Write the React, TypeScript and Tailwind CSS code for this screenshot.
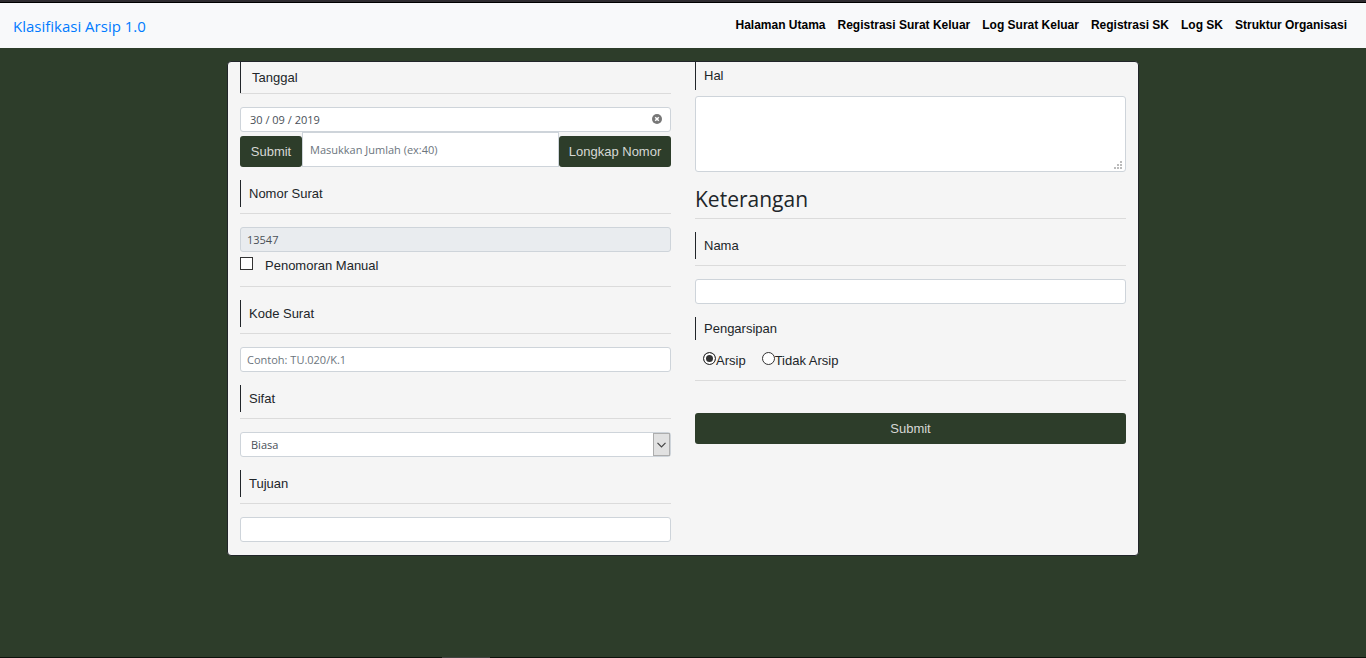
import { useState, type ReactNode } from "react";

const NAV_LINKS = [
  "Halaman Utama",
  "Registrasi Surat Keluar",
  "Log Surat Keluar",
  "Registrasi SK",
  "Log SK",
  "Struktur Organisasi",
];

const UI_FONT = "font-['Open_Sans',sans-serif]";
const FIELD = `block w-full rounded-[3px] border border-[#ced4da] bg-white text-[11px] text-[#495057] placeholder-[#6c757d] outline-none ${UI_FONT}`;
const BUTTON = "h-[31px] rounded-[3px] bg-[#2d3d2a] text-[13px] text-[#d6d8d5] cursor-pointer";

function Divider() {
  return <hr className="border-0 border-t border-t-[#dbdbdb]" />;
}

function FieldLabel({ htmlFor, children }: { htmlFor: string; children: ReactNode }) {
  return (
    <label htmlFor={htmlFor} className="flex h-[27px] items-center border-l border-[#212529] pl-2">
      {children}
    </label>
  );
}

function Field({ id, label, children }: { id: string; label: string; children: ReactNode }) {
  return (
    <div className="pt-[13px]">
      <FieldLabel htmlFor={id}>{label}</FieldLabel>
      <div className="pt-[6px] pb-[13px]">
        <Divider />
      </div>
      {children}
    </div>
  );
}

function Radio({ id, label, checked, onSelect }: { id: string; label: string; checked: boolean; onSelect: () => void }) {
  return (
    <span className="flex items-center">
      <input
        type="radio"
        name="pengarsipan"
        id={id}
        checked={checked}
        onChange={onSelect}
        className="mb-1 size-[13px] appearance-none rounded-full border border-[#333] bg-white checked:bg-[#333] checked:shadow-[inset_0_0_0_2px_white]"
      />
      <label htmlFor={id} className="pt-[2px]">
        {label}
      </label>
    </span>
  );
}

export default function App() {
  const [date, setDate] = useState("30 / 09 / 2019");
  const [archive, setArchive] = useState(true);

  return (
    <div className="flex min-h-screen flex-col bg-[#2d3d2a] font-['Liberation_Sans',Arial,sans-serif] text-[13px] leading-5 text-[#212529]">
      <div className="h-[3px] border-b border-black bg-[#2e2c30]" />
      <header className="flex h-[45px] items-center justify-between bg-[#f8f9fa] pr-[19px] pl-[13px]">
        <a href="#" className={`text-[15px] text-[#007bff] ${UI_FONT}`}>
          Klasifikasi Arsip 1.0
        </a>
        <nav className="flex gap-3 pb-[2px] text-[12px] font-bold text-black">
          {NAV_LINKS.map((link) => (
            <a key={link} href="#">
              {link}
            </a>
          ))}
        </nav>
      </header>

      <main className="flex flex-1 flex-col items-center pt-[13px]">
        <form
          onSubmit={(e) => e.preventDefault()}
          className="grid w-full max-w-[912px] grid-cols-2 gap-6 rounded-[4px] border border-[#212529] bg-[#f5f5f5] px-3 pb-[13px]"
        >
          <div>
            <label htmlFor="tanggal" className="flex h-[31px] items-center border-l border-[#212529] pl-[11px]">
              Tanggal
            </label>
            <Divider />
            <div className="relative mt-[13px]">
              <input
                id="tanggal"
                value={date}
                onChange={(e) => setDate(e.target.value)}
                className={`${FIELD} h-[25px] pr-7 pl-[9px]`}
              />
              <button
                type="button"
                aria-label="Hapus tanggal"
                onClick={() => setDate("")}
                className="absolute top-[7px] right-[9px] cursor-pointer"
              >
                <svg viewBox="0 0 10 10" className="size-[10px]">
                  <circle cx="5" cy="5" r="5" fill="#777" />
                  <path d="M3.2 3.2 L6.8 6.8 M6.8 3.2 L3.2 6.8" stroke="#fff" strokeWidth="1.5" />
                </svg>
              </button>
            </div>
            <div className="flex items-end">
              <button type="submit" className={`${BUTTON} w-[62px]`}>
                Submit
              </button>
              <input
                aria-label="Jumlah"
                placeholder="Masukkan Jumlah (ex:40)"
                className={`h-[35px] min-w-0 flex-1 border border-[#ced4da] bg-white px-[7px] text-[11px] text-[#495057] placeholder-[#6c757d] outline-none ${UI_FONT}`}
              />
              <button type="button" className={`${BUTTON} w-[112px]`}>
                Longkap Nomor
              </button>
            </div>

            <Field id="nomor" label="Nomor Surat">
              <input id="nomor" readOnly value="13547" className={`${FIELD} h-[25px] bg-[#e9ecef]! px-[6px]`} />
            </Field>
            <div className="flex h-[34px] items-start pt-1">
              <input
                type="checkbox"
                id="manual"
                className="mt-[1px] size-[13px] appearance-none border border-[#333] bg-white checked:bg-[#333] checked:shadow-[inset_0_0_0_2px_white]"
              />
              <label htmlFor="manual" className="pl-3">
                Penomoran Manual
              </label>
            </div>
            <Divider />
            <Field id="kode" label="Kode Surat">
              <input id="kode" placeholder="Contoh: TU.020/K.1" className={`${FIELD} h-[25px] px-[6px]`} />
            </Field>
            <Field id="sifat" label="Sifat">
              <div className="relative">
                <select id="sifat" className={`${FIELD} h-[25px] appearance-none pr-6 pl-[10px]`}>
                  <option>Biasa</option>
                </select>
                <span className="pointer-events-none absolute inset-y-px right-px flex w-[17px] items-center justify-center border border-[#adadad] bg-[#e1e1e1]">
                  <svg viewBox="0 0 9 6" className="h-[6px] w-[9px]" fill="none" stroke="#444" strokeWidth="1.2">
                    <path d="M0.5 0.8 L4.5 4.8 L8.5 0.8" />
                  </svg>
                </span>
              </div>
            </Field>
            <Field id="tujuan" label="Tujuan">
              <input id="tujuan" className={`${FIELD} h-[25px] px-[6px]`} />
            </Field>
          </div>

          <div>
            <label htmlFor="hal" className="flex h-[28px] items-center border-l border-[#212529] pl-2">
              Hal
            </label>
            <div className="relative pt-[6px]">
              <textarea id="hal" className={`${FIELD} h-[76px] resize-none px-[6px] py-1`} />
              <svg viewBox="0 0 8 8" className="pointer-events-none absolute right-[4px] bottom-[3px] size-2" fill="#bbb">
                <path d="M6 0h2v2H6zM3 3h2v2H3zM6 3h2v2H6zM0 6h2v2H0zM3 6h2v2H3zM6 6h2v2H6z" />
              </svg>
            </div>
            <h2 className={`flex h-[46px] items-center pt-[8px] text-[21px] ${UI_FONT}`}>Keterangan</h2>
            <Divider />
            <Field id="nama" label="Nama">
              <input id="nama" className={`${FIELD} h-[25px] px-[6px]`} />
            </Field>
            <div role="radiogroup" aria-labelledby="pengarsipan" className="pt-[13px]">
              <div id="pengarsipan" className="flex h-[23px] items-center border-l border-[#212529] pl-2">
                Pengarsipan
              </div>
              <div className="flex h-10 items-center gap-4 pl-2">
                <Radio id="arsip" label="Arsip" checked={archive} onSelect={() => setArchive(true)} />
                <Radio id="tidak-arsip" label="Tidak Arsip" checked={!archive} onSelect={() => setArchive(false)} />
              </div>
            </div>
            <Divider />
            <button type="submit" className={`${BUTTON} mt-8 w-full`}>
              Submit
            </button>
          </div>
        </form>
      </main>
      <footer className="flex h-px bg-[#0d130c]">
        <div className="ml-[442px] w-12 bg-[#414441]" />
      </footer>
    </div>
  );
}
